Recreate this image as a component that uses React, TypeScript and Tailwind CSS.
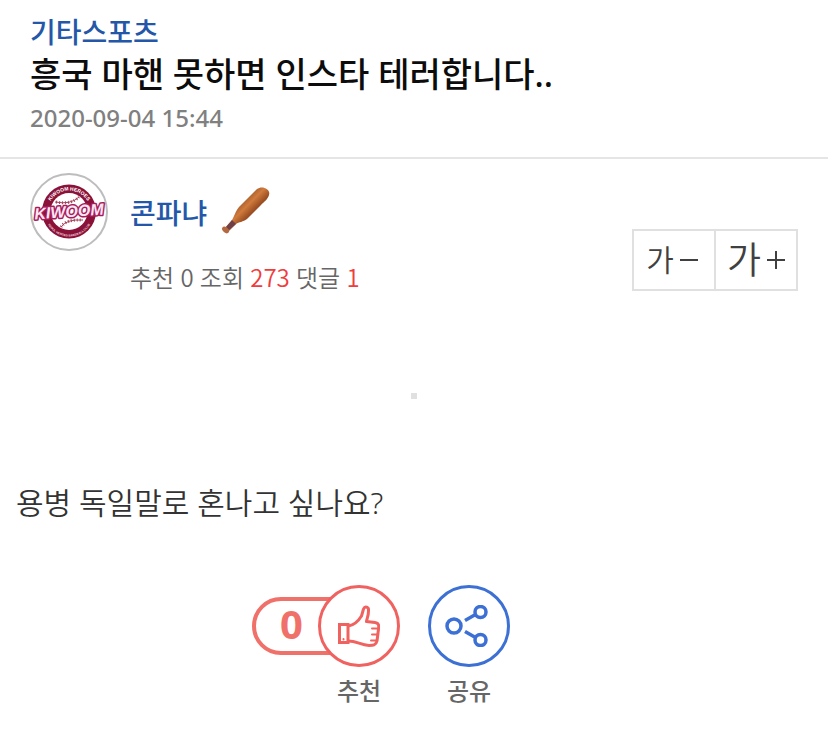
const FONT = "font-['Noto_Sans','Noto_Sans_CJK_KR',sans-serif]";

function TeamLogo() {
  return (
    <svg viewBox="0 0 78 78" className="size-[78px] shrink-0" role="img" aria-label="Kiwoom Heroes">
      <defs>
        <path id="arc-top" d="M17.500 39 A21.500 21.500 0 0 1 60.500 39" />
        <path id="arc-bottom" d="M14.500 39 A24.500 24.500 0 0 0 63.500 39" />
      </defs>
      <circle cx="39" cy="39" r="38" fill="#fff" stroke="#bdbdbd" strokeWidth="2" />
      <circle cx="39" cy="38.500" r="27" fill="#8a1238" />
      <circle cx="39" cy="38.500" r="18.500" fill="#fff" />
      <g fill="none" stroke="#a8405c" strokeWidth="1">
        <path d="M25 29 Q41 32 49 24" />
        <path d="M31 54 Q36 46 53 47" />
      </g>
      <g fill="none" stroke="#a8405c" strokeWidth="3" strokeDasharray="1 2">
        <path d="M26 29 Q41 32 49 24" />
        <path d="M31 54 Q36 46 53 47" />
      </g>
      <text fontFamily="Liberation Sans, sans-serif" fontWeight="700" fontSize="5" fill="#fff" textAnchor="middle">
        <textPath href="#arc-top" startOffset="50%">KIWOOM HEROES</textPath>
      </text>
      <text fontFamily="Liberation Sans, sans-serif" fontWeight="700" fontSize="3" fill="#f3d5df" textAnchor="middle">
        <textPath href="#arc-bottom" startOffset="50%">SEOUL HEROES BASEBALL CLUB</textPath>
      </text>
      <text
        x="39"
        y="44"
        textAnchor="middle"
        transform="rotate(-4 39 38)"
        fontFamily="Liberation Sans, sans-serif"
        fontWeight="700"
        fontStyle="italic"
        fontSize="16"
        fill="#fde6f4"
        stroke="#a61c5a"
        strokeWidth="3"
        strokeLinejoin="round"
        paintOrder="stroke"
      >
        KIWOOM
      </text>
    </svg>
  );
}

function BatIcon() {
  return (
    <svg viewBox="0 0 50 50" className="size-[50px]" role="img" aria-label="야구 배트">
      <defs>
        <linearGradient id="wood" x1="22" y1="14" x2="32" y2="24" gradientUnits="userSpaceOnUse">
          <stop offset="0" stopColor="#a9602f" />
          <stop offset="0.45" stopColor="#d07a3c" />
          <stop offset="1" stopColor="#9c4f22" />
        </linearGradient>
      </defs>
      <path
        d="M3 42 L11 33 C14 28 14 25 18 20 L36 2 C41 -2 50 2 48 8 C47 12 43 15 40 18 L26 32 C22 35 18 35 15 37 L8 44 Z"
        fill="url(#wood)"
      />
      <path d="M5 40 L11 33 L15 37 L8 43 Z" fill="#70404a" />
      <ellipse cx="4.500" cy="43" rx="4" ry="2.500" transform="rotate(40 4.500 43)" fill="#b5673f" />
    </svg>
  );
}

function ThumbIcon() {
  return (
    <svg viewBox="0 0 42 42" className="size-[42px]" fill="none" stroke="#f0625f" strokeWidth="3" strokeLinejoin="round" strokeLinecap="round" aria-hidden="true">
      <path d="M1.500 19.500h8.500v18h-8.500z" strokeLinejoin="miter" />
      <path d="M5.500 34v0.500" strokeWidth="2" />
      <path d="M10.500 21 C17 20 21 15 23.500 11 L25.500 4 C27 0.500 31 2 30.500 6 C30.500 11 29 13 28.500 16.500 L37 17.500 C41 18 41 21 40.500 24 L39 36 C38 40.500 35 40.500 31 40.500 C23 40 18 36 10.500 36" />
      <path d="M34 23.500h6M34 29.500h5M33 35.500h5" strokeWidth="2" />
    </svg>
  );
}

function ShareIcon() {
  return (
    <svg viewBox="0 0 48 42" className="h-[42px] w-12" fill="none" stroke="#3c70d4" aria-hidden="true">
      <circle cx="9" cy="21" r="7" strokeWidth="3.500" />
      <circle cx="35.500" cy="7" r="5.500" strokeWidth="3.500" />
      <circle cx="35.500" cy="35" r="5.500" strokeWidth="3.500" />
      <path d="M20 15.500 L30.500 9.500 M20 26.500 L30.500 32.500" strokeWidth="3.500" />
    </svg>
  );
}

function Count({ value, accent = false }: { value: number; accent?: boolean }) {
  return (
    <span className={`font-['Noto_Sans_CJK_KR',sans-serif] ${accent ? "text-[#f03c3c]" : ""}`}>{value}</span>
  );
}

export default function App() {
  return (
    <main className={`bg-white pb-6 text-[#666] ${FONT}`}>
      <header className="border-b-2 border-[#e5e5e5] px-[30px] pt-3 pb-[21px]">
        <a href="#board" className="block text-[28px] leading-[40px] font-medium text-[#2457a8]">
          기타스포츠
        </a>
        <h1 className="text-[34px] leading-[44px] font-medium text-[#0c0c0c]">
          흥국 마핸 못하면 인스타 테러합니다..
        </h1>
        <time dateTime="2020-09-04T15:44" className="mt-1 block text-[24px] leading-9 font-medium text-[#808080]">
          2020-09-04 15:44
        </time>
      </header>

      <section className="flex px-[30px] pt-[14px]">
        <TeamLogo />
        <div className="ml-[22px] flex-1">
          <div className="flex h-[78px] items-center gap-[14px]">
            <a href="#author" className="pt-[2px] text-[28px] leading-10 font-medium text-[#2457a8]">
              콘파냐
            </a>
            <BatIcon />
          </div>
          <p className="mt-2 text-[24px] leading-9 font-[350]">
            추천 <Count value={0} /> 조회 <Count value={273} accent /> 댓글 <Count value={1} accent />
          </p>
        </div>
        <div className="mt-14 flex h-[62px] border-2 border-[#e0e0e0] font-[350] text-[#404040]">
          <button type="button" aria-label="글자 작게" className="flex w-20 items-center justify-center gap-[6px] pr-1 text-[30px] leading-10">
            가
            <svg viewBox="0 0 18 18" className="size-[18px]" stroke="currentColor" strokeWidth="2" aria-hidden="true">
              <path d="M0 9h18" />
            </svg>
          </button>
          <button type="button" aria-label="글자 크게" className="flex w-[82px] items-center justify-center gap-[6px] border-l-2 border-[#e0e0e0] text-[37px] leading-10">
            가
            <svg viewBox="0 0 18 18" className="size-[18px]" stroke="currentColor" strokeWidth="2" aria-hidden="true">
              <path d="M0 9h18M9 0v18" />
            </svg>
          </button>
        </div>
      </section>

      <article className="px-4 pt-[97px]">
        <div className="mx-auto size-[6px] bg-[#e0e0e0]" />
        <p className="mt-20 text-[30px] leading-[48px] font-[350] text-[#333]">용병 독일말로 혼나고 싶나요?</p>
      </article>

      <div className="mt-[58px] flex justify-center gap-7 text-[24px] leading-9 font-medium">
        <button type="button" className="relative flex w-[82px] flex-col items-center gap-[6px]">
          <span className="absolute top-3 right-8 flex h-[58px] w-[116px] items-center rounded-l-full border-4 border-[#f0706a] pb-1 pl-6 text-[40px] font-bold text-[#f0706a]">
            0
          </span>
          <span className="relative flex size-[82px] items-center justify-center rounded-full border-3 border-[#f0625f] bg-white">
            <ThumbIcon />
          </span>
          추천
        </button>
        <button type="button" className="flex w-[82px] flex-col items-center gap-[6px]">
          <span className="flex size-[82px] items-center justify-center rounded-full border-3 border-[#3c70d4] bg-white">
            <ShareIcon />
          </span>
          공유
        </button>
      </div>
    </main>
  );
}
